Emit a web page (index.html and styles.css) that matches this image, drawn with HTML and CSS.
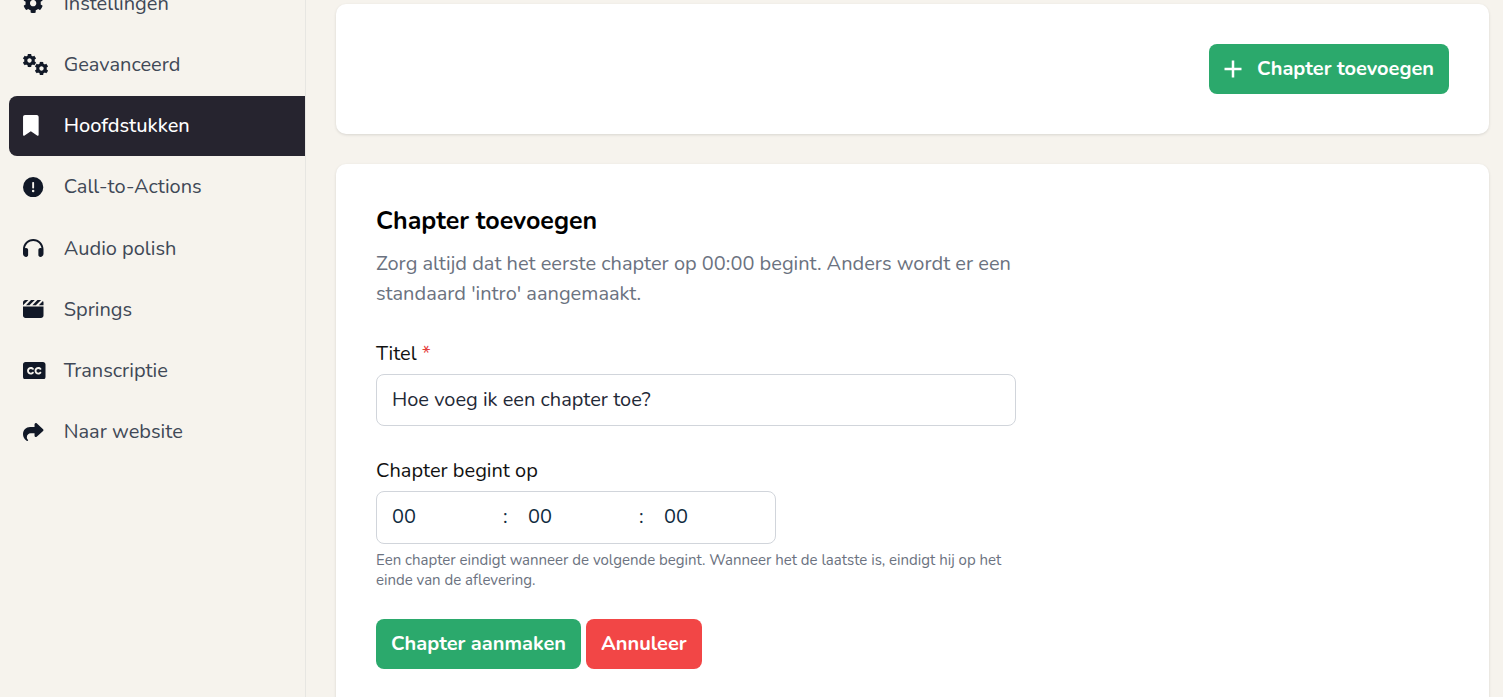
FILE: index.html
```html
<!DOCTYPE html>
<html lang="nl">
<head>
<meta charset="utf-8">
<title>Hoofdstukken</title>
<link rel="stylesheet" href="styles.css">
</head>
<body>
<svg class="defs" aria-hidden="true"><symbol id="cog" viewBox="0 0 512 512"><path d="M487.4 315.7l-42.6-24.6c4.300-23.200 4.300-47 0-70.200l42.600-24.600c4.900-2.800 7.100-8.600 5.500-14-11.100-35.600-30-67.800-54.700-94.600-3.800-4.100-10-5.100-14.800-2.300L380.800 110c-17.900-15.400-38.500-27.300-60.800-35.100V25.800c0-5.600-3.900-10.500-9.400-11.700-36.700-8.200-74.300-7.800-109.200 0-5.500 1.200-9.400 6.100-9.400 11.700V75c-22.200 7.900-42.800 19.800-60.800 35.100L88.700 85.500c-4.900-2.800-11-1.900-14.800 2.300-24.700 26.700-43.600 58.900-54.700 94.600-1.700 5.400.6 11.200 5.500 14L67.300 221c-4.300 23.200-4.300 47 0 70.200l-42.600 24.600c-4.900 2.800-7.100 8.600-5.500 14 11.100 35.600 30 67.800 54.700 94.600 3.800 4.100 10 5.100 14.800 2.300l42.600-24.600c17.900 15.400 38.500 27.300 60.800 35.100v49.200c0 5.600 3.900 10.500 9.400 11.700 36.700 8.200 74.300 7.800 109.200 0 5.500-1.200 9.400-6.100 9.400-11.700v-49.200c22.200-7.900 42.800-19.800 60.800-35.100l42.600 24.600c4.900 2.800 11 1.900 14.800-2.300 24.700-26.700 43.600-58.900 54.700-94.600 1.500-5.500-.7-11.300-5.600-14.100zM256 336c-44.100 0-80-35.900-80-80s35.900-80 80-80 80 35.900 80 80-35.900 80-80 80z"/></symbol></svg>
<div class="app">
  <aside class="sidebar">
    <nav class="nav">
      <a class="nav-item"><span class="icon-box"><svg class="icon i-round" viewBox="0 0 512 512"><use href="#cog"/></svg></span><span>Instellingen</span></a>
      <a class="nav-item"><span class="icon-box"><svg class="icon i-gears" viewBox="0 0 25 21"><use href="#cog" x="-.5" y="-.5" width="14" height="14"/><use href="#cog" x="11.500" y="7.500" width="14" height="14"/></svg></span><span>Geavanceerd</span></a>
      <a class="nav-item active"><span class="icon-box"><svg class="icon i-mark" viewBox="0 0 384 512"><path d="M0 48V487.700C0 501.100 10.900 512 24.300 512c5 0 9.900-1.500 14-4.400L192 400 345.700 507.600c4.100 2.900 9 4.400 14 4.400c13.400 0 24.300-10.900 24.300-24.300V48c0-26.500-21.500-48-48-48H48C21.500 0 0 21.500 0 48z"/></svg></span><span>Hoofdstukken</span></a>
      <a class="nav-item"><span class="icon-box"><svg class="icon i-round" viewBox="0 0 512 512"><path d="M256 512A256 256 0 1 0 256 0a256 256 0 1 0 0 512zm0-384c13.300 0 24 10.700 24 24V264c0 13.300-10.700 24-24 24s-24-10.700-24-24V152c0-13.300 10.700-24 24-24zM224 352a32 32 0 1 1 64 0 32 32 0 1 1 -64 0z"/></svg></span><span>Call-to-Actions</span></a>
      <a class="nav-item"><span class="icon-box"><svg class="icon i-flat" viewBox="0 32 512 448"><path d="M256 80C149.900 80 62.400 159.400 49.600 262c9.400-3.800 19.600-6 30.400-6c26.500 0 48 21.500 48 48V432c0 26.500-21.500 48-48 48c-44.200 0-80-35.800-80-80V384 336 288C0 146.600 114.600 32 256 32s256 114.600 256 256v48 48 16c0 44.200-35.800 80-80 80c-26.500 0-48-21.500-48-48V304c0-26.500 21.500-48 48-48c10.800 0 21 2.100 30.400 6C449.600 159.400 362.100 80 256 80z"/></svg></span><span>Audio polish</span></a>
      <a class="nav-item"><span class="icon-box"><svg class="icon i-flat" viewBox="0 32 512 448"><path d="M448 32H361.900l-1 1-127 127h92.100l1-1L453.800 32.300c-1.900-.2-3.800-.3-5.800-.3zm64 128V96c0-15.100-5.300-29.100-14-40l-104 104H512zM294.100 32H201.900l-1 1L73.900 160h92.100l1-1 127-127zM64 32C28.700 32 0 60.700 0 96v64H6.100l1-1 127-127H64zM512 192H0V416c0 35.300 28.700 64 64 64H448c35.300 0 64-28.700 64-64V192z"/></svg></span><span>Springs</span></a>
      <a class="nav-item"><span class="icon-box"><svg class="icon i-cc" viewBox="0 32 576 448"><path d="M0 96C0 60.700 28.700 32 64 32H512c35.300 0 64 28.700 64 64V416c0 35.300-28.700 64-64 64H64c-35.300 0-64-28.700-64-64V96zM200 208c14.200 0 27 6.100 35.800 16c8.800 9.900 24 10.700 33.900 1.900s10.700-24 1.900-33.900c-17.500-19.600-43.100-32-71.500-32c-53 0-96 43-96 96s43 96 96 96c28.400 0 54-12.400 71.500-32c8.800-9.900 8-25-1.900-33.900s-25-8-33.900 1.900c-8.800 9.900-21.600 16-35.800 16c-26.500 0-48-21.500-48-48s21.500-48 48-48zm144 48c0-26.500 21.500-48 48-48c14.200 0 27 6.100 35.800 16c8.800 9.900 24 10.700 33.900 1.900s10.700-24 1.900-33.900c-17.500-19.600-43.100-32-71.500-32c-53 0-96 43-96 96s43 96 96 96c28.400 0 54-12.400 71.500-32c8.800-9.900 8-25-1.900-33.900s-25-8-33.900 1.900c-8.800 9.900-21.600 16-35.800 16c-26.500 0-48-21.500-48-48z"/></svg></span><span>Transcriptie</span></a>
      <a class="nav-item"><span class="icon-box"><svg class="icon i-flat" viewBox="0 32 512 448"><path d="M307 34.800c-11.500 5.100-19 16.600-19 29.200v64H176C78.800 128 0 206.800 0 304C0 417.300 81.500 467.900 100.200 478.100c2.500 1.400 5.300 1.900 8.100 1.900c10.900 0 19.700-8.900 19.700-19.700c0-7.500-4.300-14.400-9.800-19.500C108.800 431.900 96 414.400 96 384c0-53 43-96 96-96h96v64c0 12.600 7.400 24.100 19 29.200s25 3 34.400-5.400l160-144c6.700-6.100 10.600-14.700 10.600-23.800s-3.800-17.700-10.600-23.800l-160-144c-9.400-8.500-22.900-10.600-34.400-5.400z"/></svg></span><span>Naar website</span></a>
    </nav>
  </aside>
  <main class="main">
    <section class="card card-top">
      <button class="btn btn-green btn-add"><svg class="plus" viewBox="0 0 18 18"><path d="M9 .5v17M.5 9h17"/></svg>Chapter toevoegen</button>
    </section>
    <section class="card card-form">
      <h2 class="title">Chapter toevoegen</h2>
      <p class="intro">Zorg altijd dat het eerste chapter op 00:00 begint. Anders wordt er een standaard 'intro' aangemaakt.</p>
      <label class="label label-title">Titel <span class="req">*</span></label>
      <div class="field field-title">Hoe voeg ik een chapter toe?</div>
      <label class="label label-time">Chapter begint op</label>
      <div class="field field-time">
        <span class="part">00</span><span class="sep">:</span>
        <span class="part">00</span><span class="sep">:</span>
        <span class="part">00</span>
      </div>
      <p class="hint">Een chapter eindigt wanneer de volgende begint. Wanneer het de laatste is, eindigt hij op het einde van de aflevering.</p>
      <div class="actions">
        <button class="btn btn-green">Chapter aanmaken</button>
        <button class="btn btn-red">Annuleer</button>
      </div>
    </section>
  </main>
</div>
</body>
</html>
```
FILE: styles.css
```css
* { box-sizing: border-box; }
html, body { margin: 0; height: 100%; overflow: hidden; }
body {
  background: #f6f3ed;
  font-family: "Nunito", "Lato", "Noto Sans", sans-serif;
  color: #111827;
}
.defs { display: none; }
.app { display: flex; height: 697px; overflow: hidden; }
.sidebar {
  width: 306px;
  flex: none;
  border-right: 1px solid #e7e6e2;
  padding-left: 9px;
}
.nav {
  display: flex;
  flex-direction: column;
  gap: 1.25px;
  margin-top: -26.5px;
}
.nav-item {
  display: flex;
  align-items: center;
  height: 60px;
  padding: 0 0 1px 14.3px;
  font-size: 20px;
  color: #404856;
  border-radius: 8px 0 0 8px;
}
.icon-box { width: 40.400px; flex: none; display: flex; align-items: center; }
.icon { display: block; fill: #111827; }
.i-round { width: 20.300px; height: 20.300px; }
.i-flat { width: 20.500px; height: 18px; }
.i-gears { width: 25px; height: 21px; }
.i-mark { width: 15.700px; height: 20.800px; }
.i-cc { width: 22.500px; height: 17.500px; }
.active { background: #26242f; color: #fff; font-weight: 500; }
.active .icon { fill: #fff; }
.main { flex: 1; padding: 4px 14px 0 30px; display: flex; flex-direction: column; gap: 30px; }
.card {
  background: #fff;
  border-radius: 10px;
  box-shadow: 0 1px 3px rgba(0,0,0,.12);
}
.card-top { height: 130px; padding: 40px; display: flex; justify-content: flex-end; flex: none; }
.card-form { flex: 1; padding: 40px; margin-bottom: -60px; }
.btn {
  border: 0;
  height: 50px;
  padding: 0 15px 2px;
  border-radius: 8px;
  color: #fff;
  font: 700 20px "Nunito", "Lato", "Noto Sans", sans-serif;
}
.btn-green { background: #2ba96c; }
.btn-red { background: #f24646; margin-left: 1px; }
.btn-add { display: flex; align-items: center; }
.plus { width: 18px; height: 18px; margin: 2px 15px 0 0; stroke: #fff; stroke-width: 2.5; fill: none; }
.title { margin: 0; font-size: 25px; line-height: 34px; font-weight: 700; color: #000; }
.intro { margin: 11px 0 0; width: 640px; font-size: 20px; line-height: 30px; color: #6b7280; }
.label { display: block; font-size: 20px; line-height: 28px; color: #111; }
.label-title { margin-top: 31px; }
.label-time { margin-top: 31px; }
.req { color: #e53e3e; }
.field {
  border: 1px solid #d1d5db;
  border-radius: 8px;
  background: #fff;
  font-size: 20px;
  display: flex;
  align-items: center;
  margin-top: 6px;
  padding-bottom: 2px;
}
.field-title { width: 640px; height: 52px; padding-left: 15px; color: #1f2937; }
.field-time { width: 400px; height: 53px; padding-left: 15px; color: #0f2a3d; }
.part { width: 111px; }
.sep { width: 25px; }
.hint { margin: 6px 0 0; width: 640px; font-size: 15px; line-height: 20px; color: #6b7280; }
.actions { display: flex; gap: 4px; margin-top: 29px; }
```
